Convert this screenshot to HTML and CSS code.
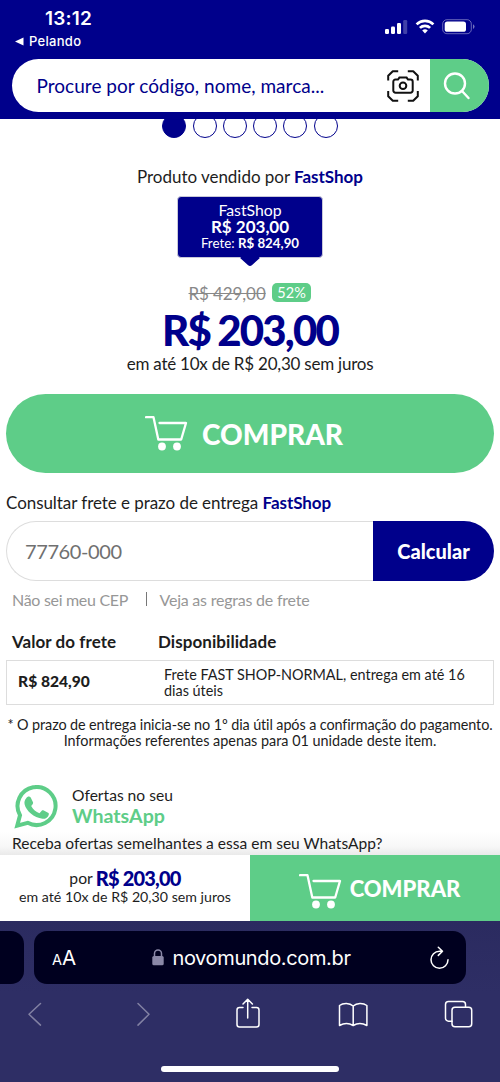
FILE: index.html
```html
<!DOCTYPE html>
<html lang="pt-BR">
<head>
<meta charset="utf-8">
<title>Novo Mundo</title>
<link rel="stylesheet" href="styles.css">
</head>
<body>
<div class="phone">
  <header class="header">
    <div class="status">
      <div class="status-left">
        <div class="clock">13:12</div>
        <div class="back"><svg width="9" height="9" viewBox="0 0 9 9"><path d="M0 4.5 8.500 .5v8z" fill="#fff"/></svg><span>Pelando</span></div>
      </div>
      <svg class="status-icons" width="92" height="16" viewBox="0 0 92 16" fill="#fff">
        <rect x="0" y="10" width="4" height="5" rx="1.200"/><rect x="6" y="7.500" width="4" height="7.500" rx="1.200"/><rect x="12" y="4" width="4" height="11" rx="1.200"/><rect x="18.200" y="1" width="4" height="14" rx="1.200" opacity=".25"/>
        <g fill="none" stroke="#fff" stroke-width="2.700"><path d="M31.600 5.400a12 12 0 0 1 16.800 0"/><path d="M34.900 8.900a7.300 7.300 0 0 1 10.200 0"/></g>
        <path d="M37.200 11.500a4 4 0 0 1 5.600 0L40 14.400z"/>
        <rect x="57.700" y=".7" width="28.600" height="14" rx="4.200" fill="none" stroke="#fff" stroke-opacity=".4"/>
        <rect x="59.700" y="2.500" width="21.300" height="10.300" rx="2.600"/><path d="M88 5.300v4.600a2.500 2.500 0 0 0 0-4.600z" opacity=".45"/>
      </svg>
    </div>
    <div class="search">
      <span class="search-text">Procure por código, nome, marca...</span>
      <svg class="scan" width="32" height="32" viewBox="0 0 32 32" fill="none" stroke="#111" stroke-width="2">
        <path d="M1.200 10.500V5.800l4.600-4.600h5.400M20.800 1.200h5.400l4.600 4.600v4.700M30.800 21v5.200l-4.600 4.600h-5.400M11.200 30.800H5.800l-4.600-4.600V21" stroke-linejoin="round"/>
        <path d="M8.500 9.500h2.500l1.400-1.900h7.200l1.400 1.900h2.500a2.200 2.200 0 0 1 2.200 2.200v8.800a2.200 2.200 0 0 1-2.200 2.200h-15a2.200 2.200 0 0 1-2.200-2.200v-8.800A2.200 2.200 0 0 1 8.500 9.500z"/><circle cx="16" cy="15.700" r="3.300"/>
      </svg>
      <div class="search-button"><svg width="28" height="28" viewBox="0 0 28 28" fill="none" stroke="#fff" stroke-width="2.400" stroke-linecap="round"><circle cx="12" cy="11.500" r="10"/><path d="m19 19 6.500 7"/></svg></div>
    </div>
  </header>

  <main class="content">
    <div class="dots"><i class="dot active"></i><i class="dot"></i><i class="dot"></i><i class="dot"></i><i class="dot"></i><i class="dot"></i></div>
    <div class="sold-by">Produto vendido por <b>FastShop</b></div>
    <div class="seller">
      <div class="seller-name">FastShop</div>
      <div class="seller-price">R$ 203,00</div>
      <div class="seller-ship">Frete: <b>R$ 824,90</b></div>
    </div>
    <div class="old-row"><s class="old-price">R$ 429,00</s><span class="discount">52%</span></div>
    <div class="price">R$ 203,00</div>
    <div class="installments">em até 10x de R$ 20,30 sem juros</div>
    <div class="buy">
      <svg width="43" height="36" viewBox="0 0 43 36"><path d="M1 1.200h7.500l4.800 22.300h22.900L41 7H14.500" fill="none" stroke="#fff" stroke-width="2.300" stroke-linecap="round" stroke-linejoin="round"/><circle cx="17" cy="30.500" r="3.900" fill="#fff"/><circle cx="32" cy="30.500" r="3.900" fill="#fff"/></svg>
      <span>COMPRAR</span>
    </div>
    <div class="ship-title">Consultar frete e prazo de entrega <b>FastShop</b></div>
    <div class="zip"><div class="zip-input">77760-000</div><div class="zip-button">Calcular</div></div>
    <div class="links"><span class="link-cep">Não sei meu CEP</span><i class="divider"></i><span class="link-rules">Veja as regras de frete</span></div>
    <div class="table-head"><span class="th-value">Valor do frete</span><span class="th-avail">Disponibilidade</span></div>
    <div class="table-row"><span class="td-value">R$ 824,90</span><span class="td-avail">Frete FAST SHOP-NORMAL, entrega em até 16<br>dias úteis</span></div>
    <div class="note"><div class="note-one">* O prazo de entrega inicia-se no 1º dia útil após a confirmação do pagamento.</div><div class="note-two">Informações referentes apenas para 01 unidade deste item.</div></div>
    <div class="whats">
      <svg width="44" height="44" viewBox="0 0 44 44"><path d="M3.200 40.700 6 30.300A19 19 0 1 1 13.700 37.800z" fill="none" stroke="#5ecd88" stroke-width="4"/><path d="M12.200 13.200c1-1.600 3.300-2.200 4.500-.8l2.300 4.800c.3 1-.1 1.700-.8 2.500l-1 1.200c2 3.700 4.600 5.900 8.300 7.300l2.200-2.400c.8-.7 1.300-.6 2.100-.2l4.200 2.100c.9.500 1 .9.700 2.200-.6 2.600-3.500 4.200-6.200 3.900-8.600-1-16.500-8-17.900-14.500-.5-2.500.2-4.400 1.600-6.100z" fill="#5ecd88"/></svg>
      <div><div class="whats-small">Ofertas no seu</div><div class="whats-name">WhatsApp</div></div>
    </div>
    <div class="receive">Receba ofertas semelhantes a essa em seu WhatsApp?</div>
  </main>

  <div class="sticky">
    <div class="sticky-price">
      <div class="sticky-main"><span>por</span><b>R$ 203,00</b></div>
      <div class="sticky-sub">em até 10x de R$ 20,30 sem juros</div>
    </div>
    <div class="sticky-buy">
      <svg width="43" height="36" viewBox="0 0 43 36"><path d="M1 1.200h7.500l4.800 22.300h22.900L41 7H14.500" fill="none" stroke="#fff" stroke-width="2.300" stroke-linecap="round" stroke-linejoin="round"/><circle cx="17" cy="30.500" r="3.900" fill="#fff"/><circle cx="32" cy="30.500" r="3.900" fill="#fff"/></svg>
      <span>COMPRAR</span>
    </div>
  </div>

  <footer class="browser">
    <div class="tabs">
      <div class="previous-tab"></div>
      <div class="address">
        <div class="reader"><small>A</small>A</div>
        <div class="domain"><svg width="12" height="17" viewBox="0 0 12 17"><rect x=".3" y="7" width="11.400" height="9.300" rx="1.600" fill="#8a88a7"/><path d="M2.500 8V4.600a3.500 3.500 0 0 1 7 0V8" fill="none" stroke="#8a88a7" stroke-width="1.500"/></svg><span>novomundo.com.br</span></div>
        <svg class="reload" width="22" height="24" viewBox="0 0 22 24" fill="none" stroke="#fff" stroke-width="1.500" stroke-linecap="round" stroke-linejoin="round"><path d="M14.500 5.200H11.500A8.500 8.500 0 1 0 20 13.700M10.300 1.200l4.200 4-4.200 4.200"/></svg>
      </div>
    </div>
    <svg class="tools" width="500" height="40" viewBox="0 0 500 40" fill="none" stroke="#fff" stroke-width="1.500" stroke-linecap="round" stroke-linejoin="round">
      <g stroke="#8281a3"><path d="M40.500 9.500 29 20.300l11.500 10.800M138 9.500l11 10.800-11 10.800"/></g>
      <path d="M243 13.500h-3.500a2.500 2.500 0 0 0-2.500 2.500v14.500a2.500 2.500 0 0 0 2.500 2.500h17a2.500 2.500 0 0 0 2.500-2.500V16a2.500 2.500 0 0 0-2.500-2.500H252M247.700 24V5.500M243 10l4.700-4.700 4.700 4.700"/>
      <path d="M353.200 31.500V12c-3.500-3.300-10-3.300-13.700-.5v20c4.500-2.500 9.500-2.500 13.700 0 4.200-2.500 9.200-2.500 13.700 0v-20c-3.700-2.800-10.200-2.800-13.700.5"/>
      <path d="M452 27.200h-3.500a3 3 0 0 1-3-3V10.500a3 3 0 0 1 3-3h14a3 3 0 0 1 3 3v2.500"/><rect x="452" y="13.200" width="19.700" height="19.500" rx="3"/>
    </svg>
    <div class="home"></div>
  </footer>
</div>
</body>
</html>
```
FILE: styles.css
```css
* { box-sizing: border-box; }
body { margin: 0; background: #fff; }
.phone { width: 500px; height: 1082px; display: flex; flex-direction: column; overflow: hidden; font-family: Lato, sans-serif; color: #1d1d1d; white-space: nowrap; }
svg { display: block; flex: none; }
b { color: #00008b; }

.header { height: 119px; flex: none; background: #00008b; color: #fff; padding: 0 11px 0 12px; }
.status { height: 59px; display: flex; justify-content: space-between; font-family: Inter, sans-serif; }
.status-left { padding-top: 8px; }
.clock { font-size: 19px; line-height: 22px; font-weight: 600; padding-left: 33px; letter-spacing: .2px; }
.back { display: flex; align-items: center; gap: 5px; padding: 3px 0 0 3px; font-size: 13px; line-height: 16px; font-weight: 500; letter-spacing: .3px; }
.status-icons { margin: 19px 12px 0 0; }
.search { height: 53px; display: flex; align-items: center; border-radius: 27px; overflow: hidden; background: #fff; }
.search-text { flex: 1; padding-left: 24.500px; color: #00008b; font-size: 19px; line-height: 24px; letter-spacing: .03px; }
.scan { margin-right: 11px; }
.search-button { width: 59px; height: 53px; display: flex; align-items: center; justify-content: center; padding-right: 6px; background: #5ecd88; }

.content { height: 736px; flex: none; overflow: hidden; display: flex; flex-direction: column; }
.dots { height: 19px; flex: none; overflow: hidden; display: flex; align-items: flex-end; justify-content: center; gap: 6.300px; }
.dot { flex: none; width: 24px; height: 24px; border: 1px solid #00008b; border-radius: 50%; }
.dot.active { background: #00008b; }
.sold-by { margin-top: 28px; font-size: 17px; line-height: 22px; text-align: center; letter-spacing: -.03px; }
.seller { position: relative; width: 146px; height: 62px; flex: none; margin: 8px auto 0; padding-top: 5px; border: 1px solid #c8c8d8; border-radius: 4px; background: #00008b; color: #fff; text-align: center; }
.seller::after { content: ""; position: absolute; left: 65px; top: 54px; width: 14px; height: 14px; background: #00008b; border-radius: 0 0 3px 0; transform: scaleY(.9) rotate(45deg); }
.seller b { color: #fff; }
.seller-name { font-size: 15.800px; line-height: 16px; }
.seller-price { font-size: 17px; line-height: 17px; font-weight: 700; }
.seller-ship { font-size: 13.300px; line-height: 16px; }
.old-row { height: 20px; flex: none; margin-top: 25px; display: flex; justify-content: center; gap: 6px; }
.old-price { color: #888; font-size: 17px; line-height: 21px; letter-spacing: -.1px; }
.discount { height: 19px; padding: 0 5.700px; border-radius: 5px; background: #5ecd88; color: #fff; font-size: 14.500px; line-height: 19px; }
.price { margin-top: 1px; font-size: 42px; line-height: 52px; font-weight: 900; letter-spacing: -1.800px; word-spacing: -1px; color: #00008b; text-align: center; }
.installments { margin-top: -3px; font-size: 17px; line-height: 22px; text-align: center; letter-spacing: -.23px; }
.buy { height: 79px; flex: none; margin: 19px 6px 0; padding-right: 12px; border-radius: 40px; background: #5ecd88; color: #fff; display: flex; align-items: center; justify-content: center; gap: 14px; font-size: 28px; font-weight: 900; }
.ship-title { margin: 19px 6px 0; font-size: 17px; line-height: 22px; letter-spacing: -.06px; }
.zip { height: 60px; flex: none; margin: 7px 6px 0; display: flex; }
.zip-input { flex: 1; padding-left: 18px; border: 1px solid #ddd; border-right: 0; border-radius: 30px 0 0 30px; color: #707070; font-size: 20px; line-height: 59px; letter-spacing: -.4px; }
.zip-button { width: 121px; border-radius: 0 30px 30px 0; background: #00008b; color: #fff; text-align: center; font-size: 20px; line-height: 60px; font-weight: 900; }
.links { display: flex; margin-top: 9px; padding-left: 12px; color: #979797; font-size: 16px; line-height: 20px; letter-spacing: -.22px; }
.link-cep { width: 134px; letter-spacing: -.3px; }
.divider { width: 1px; height: 14px; margin-top: 2px; background: #777; }
.link-rules { margin-left: 12.500px; }
.table-head { display: flex; margin-top: 21px; padding-left: 12px; font-size: 17px; line-height: 22px; font-weight: 700; letter-spacing: .06px; }
.th-value { width: 146px; }
.table-row { height: 45px; flex: none; display: flex; margin: 7px 6px 0; padding: 6px 0 0 11px; border: 1px solid #ddd; font-size: 14.400px; line-height: 16px; }
.td-value { width: 146px; padding-top: 6px; font-size: 15.600px; font-weight: 900; }
.note { margin-top: 12px; font-size: 14.400px; line-height: 16px; text-align: center; }
.note-one { letter-spacing: -.1px; }
.whats { display: flex; margin-top: 36px; padding-left: 14px; gap: 14px; }
.whats-small { font-size: 15.600px; line-height: 20px; }
.whats-name { font-size: 19.600px; line-height: 21px; font-weight: 700; color: #5ecd88; }
.receive { margin-top: 3px; flex: none; height: 27px; padding-left: 12px; font-size: 15.550px; line-height: 22px; background: linear-gradient(#fff, #f7f7f7 55%, #e3e3e3); }

.sticky { height: 66px; flex: none; display: flex; }
.sticky-price { width: 250px; padding-top: 13px; text-align: center; }
.sticky-main { display: flex; justify-content: center; gap: 3px; font-size: 15.700px; line-height: 21px; }
.sticky-main b { font-size: 20px; font-weight: 900; letter-spacing: -.800px; }
.sticky-sub { margin-top: -1px; font-size: 14.200px; line-height: 18px; }
.sticky-buy { flex: 1; display: flex; align-items: center; justify-content: center; gap: 8px; padding-left: 9px; background: #5ecd88; color: #fff; font-size: 22px; font-weight: 900; }
.sticky-buy svg { margin-top: 8px; }

.browser { height: 161px; flex: none; padding-top: 10px; background: linear-gradient(#2b2b60, #2e2e65 45%); color: #fff; font-family: Inter, sans-serif; }
.tabs { display: flex; gap: 10px; }
.previous-tab { width: 24px; height: 53px; border-radius: 0 13px 13px 0; background: #00001f; }
.address { width: 432px; height: 53px; border-radius: 13px; background: #00001f; display: flex; align-items: center; justify-content: space-between; padding: 0 16px 0 18px; }
.reader { width: 30px; padding-top: 2px; font-size: 20.500px; line-height: 24px; }
.reader small { font-size: 14.500px; }
.domain { display: flex; align-items: center; gap: 8px; margin-right: 7px; font-size: 20px; line-height: 24px; letter-spacing: -.36px; }
.tools { margin-top: 10px; }
.home { width: 178px; height: 6px; margin: 32px auto 0; border-radius: 3px; background: #fff; }
```
